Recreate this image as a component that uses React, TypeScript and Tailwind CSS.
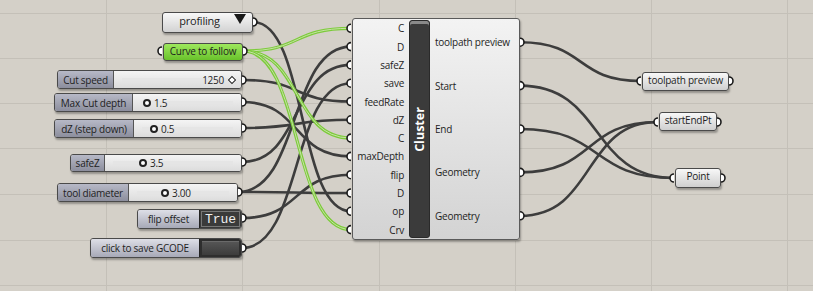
import React from "react";

type Pt = [number, number];

const IN_Y = Array.from({ length: 12 }, (_, i) => 28.3 + i * 18.3);
const OUT_Y = Array.from({ length: 5 }, (_, i) => 42.2 + i * 43.4);
const IN_X = 351;
const OUT_X = 520;

const inputs = ["C", "D", "safeZ", "save", "feedRate", "dZ", "C", "maxDepth", "flip", "D", "op", "Crv"];
const outputs = ["toolpath preview", "Start", "End", "Geometry", "Geometry"];

const wires: { a: Pt; b: Pt; green?: boolean }[] = [
  { a: [253, 22], b: [IN_X, IN_Y[10]] },
  { a: [243, 80], b: [IN_X, IN_Y[4]] },
  { a: [242, 102], b: [IN_X, IN_Y[7]] },
  { a: [242, 128], b: [IN_X, IN_Y[5]] },
  { a: [242, 162], b: [IN_X, IN_Y[2]] },
  { a: [238, 192], b: [IN_X, IN_Y[1]] },
  { a: [238, 192], b: [IN_X, IN_Y[9]] },
  { a: [242, 218], b: [IN_X, IN_Y[8]] },
  { a: [242, 248], b: [IN_X, IN_Y[3]] },
  { a: [OUT_X, OUT_Y[0]], b: [641, 81] },
  { a: [OUT_X, OUT_Y[1]], b: [674, 178] },
  { a: [OUT_X, OUT_Y[2]], b: [674, 178] },
  { a: [OUT_X, OUT_Y[3]], b: [658, 122] },
  { a: [OUT_X, OUT_Y[4]], b: [658, 122] },
  { a: [243, 51], b: [IN_X, IN_Y[0]], green: true },
  { a: [243, 51], b: [IN_X, IN_Y[6]], green: true },
  { a: [243, 51], b: [IN_X, IN_Y[11]], green: true },
];

const outGrips: Pt[] = [
  [253, 22], [243, 51], [242, 80], [242, 102], [242, 128], [242, 162], [238, 192], [242, 218], [242, 248],
  ...OUT_Y.map((y) => [OUT_X, y] as Pt),
  [729, 81], [717, 122], [721, 178],
];
const inGrips: Pt[] = [[162, 51], ...IN_Y.map((y) => [IN_X, y] as Pt), [641, 81], [658, 122], [674, 178]];

function wirePath([x1, y1]: Pt, [x2, y2]: Pt) {
  const c = Math.max(Math.abs(x2 - x1) * 0.55, 30);
  return `M${x1},${y1} C${x1 + c},${y1} ${x2 - c},${y2} ${x2},${y2}`;
}

const nodeBox =
  "absolute flex items-stretch rounded-[3px] border border-[#4a4a4a] shadow-[1px_2px_2px_rgba(0,0,0,0.3)] overflow-hidden";

function Slider(p: { x: number; y: number; w: number; h: number; lw: number; label: string; value: string; knob?: number; diamond?: boolean }) {
  return (
    <div className={nodeBox} style={{ left: p.x, top: p.y, width: p.w, height: p.h }}>
      <div
        className="flex items-center justify-center whitespace-nowrap border-r border-[#555] bg-gradient-to-b from-[#b7b9c7] to-[#8c8e9d] text-[#1e1e1e]"
        style={{ width: p.lw }}
      >
        {p.label}
      </div>
      <div className="relative flex-1 bg-gradient-to-b from-[#f4f4f4] to-[#dcdcdc]">
        <div className="absolute left-[8px] right-[8px] top-1/2 h-[3px] -translate-y-1/2 border-y border-[#e0e0e0] bg-[#ebebeb]" />
        {p.diamond ? (
          <div className="absolute right-[6px] top-0 flex h-full items-center gap-[5px] text-[#1e1e1e]">
            <span>{p.value}</span>
            <span className="h-[6px] w-[6px] rotate-45 border-[1.5px] border-[#222] bg-white" />
          </div>
        ) : (
          <div className="absolute top-0 flex h-full items-center gap-[3px] text-[#1e1e1e]" style={{ left: (p.knob ?? 0) - 4 }}>
            <span className="h-[8px] w-[8px] rounded-full border-2 border-[#222] bg-white" />
            <span>{p.value}</span>
          </div>
        )}
      </div>
    </div>
  );
}

function Simple(p: { x: number; y: number; w: number; h: number; label: string }) {
  return (
    <div
      className={`${nodeBox} items-center justify-center whitespace-nowrap bg-gradient-to-b from-[#f8f8f8] to-[#cfcfcf] text-[#1e1e1e]`}
      style={{ left: p.x, top: p.y, width: p.w, height: p.h }}
    >
      {p.label}
    </div>
  );
}

export default function App() {
  return (
    <div className="relative h-[291px] w-[813px] overflow-hidden bg-[#d4d0c8] font-['Open_Sans',sans-serif] text-[10px] leading-[normal] tracking-[-0.25px]">
      <svg className="absolute inset-0" width={813} height={291}>
        {[106, 242, 379, 515, 651, 787].map((x) => (
          <line key={"v" + x} x1={x + 0.5} y1={0} x2={x + 0.5} y2={291} stroke="#c4c0b8" strokeWidth={1} />
        ))}
        {[13, 58, 103, 148, 194, 240, 285].map((y) => (
          <line key={"h" + y} x1={0} y1={y + 0.5} x2={813} y2={y + 0.5} stroke="#c4c0b8" strokeWidth={1} />
        ))}
        {wires.map((w, i) =>
          w.green ? (
            <g key={i}>
              <path d={wirePath(w.a, w.b)} fill="none" stroke="#7ccb3a" strokeWidth={3.2} />
              <path d={wirePath(w.a, w.b)} fill="none" stroke="#c6e2a6" strokeWidth={1} />
            </g>
          ) : (
            <path key={i} d={wirePath(w.a, w.b)} fill="none" stroke="#3d3d3d" strokeWidth={2.6} />
          )
        )}
      </svg>

      {/* value list */}
      <div
        className={`${nodeBox} items-center bg-gradient-to-b from-[#f8f8f8] to-[#d2d2d2] text-[11px] text-[#1e1e1e]`}
        style={{ left: 162, top: 12, width: 91, height: 21 }}
      >
        <span className="flex-1 pl-[2px] text-center">profiling</span>
        <svg width={12} height={11} className="mr-[6px] shrink-0">
          <polygon points="0,1 12,1 6,11" fill="#1a1a1a" />
        </svg>
      </div>

      {/* curve param */}
      <div
        className={`${nodeBox} items-center justify-center whitespace-nowrap border-[#3f6e1e] bg-gradient-to-b from-[#9ee85c] to-[#69c22a] text-[#1e1e1e]`}
        style={{ left: 163, top: 43, width: 80, height: 18 }}
      >
        Curve to follow
      </div>

      <Slider x={57} y={70} w={185} h={19} lw={56} label="Cut speed" value="1250" diamond />
      <Slider x={54} y={93} w={188} h={19} lw={78} label="Max Cut depth" value="1.5" knob={146 - 132} />
      <Slider x={54} y={119} w={188} h={19} lw={79} label="dZ (step down)" value="0.5" knob={153 - 133} />
      <Slider x={70} y={154} w={172} h={18} lw={34} label="safeZ" value="3.5" knob={142 - 104} />
      <Slider x={57} y={183} w={181} h={19} lw={71} label="tool diameter" value="3.00" knob={164 - 128} />

      {/* toggle */}
      <div className={nodeBox} style={{ left: 137, top: 209, width: 105, height: 20 }}>
        <div className="flex w-[61px] items-center justify-center whitespace-nowrap bg-gradient-to-b from-[#dedfe7] to-[#a7a9b7] text-[#1e1e1e]">
          flip offset
        </div>
        <div className="flex flex-1 items-center justify-center border-l border-[#222] bg-[#3a3a3a] p-[1px]">
          <div className="flex h-full w-full items-center justify-center border border-[#777] font-['Liberation_Mono',monospace] text-[13px] tracking-normal text-[#eeeeee]">
            True
          </div>
        </div>
      </div>

      {/* button */}
      <div className={nodeBox} style={{ left: 90, top: 238, width: 152, height: 20 }}>
        <div className="flex w-[108px] items-center justify-center whitespace-nowrap bg-gradient-to-b from-[#dedfe7] to-[#a7a9b7] text-[#1e1e1e]">
          click to save GCODE
        </div>
        <div className="flex flex-1 border-l border-[#222] bg-[#2e2e2e] p-[2px]">
          <div className="h-full w-full border-t border-[#6a6a6a] bg-gradient-to-b from-[#555] to-[#3c3c3c]" />
        </div>
      </div>

      {/* cluster */}
      <div
        className="absolute flex rounded-[3px] border border-[#5a5a5a] bg-gradient-to-b from-[#f3f3f3] to-[#d3d3d3] text-[#1e1e1e] shadow-[1px_2px_2px_rgba(0,0,0,0.3)]"
        style={{ left: 352, top: 18, width: 168, height: 222 }}
      >
        <div className="flex w-[56px] flex-col justify-center pr-[5px]">
          {inputs.map((n, i) => (
            <div key={i} className="flex h-[18.3px] items-center justify-end whitespace-nowrap">
              {n}
            </div>
          ))}
        </div>
        <div className="my-[1px] flex w-[21px] items-center justify-center rounded-[3px] border border-[#2a2a2a] bg-[#3b3b3b] shadow-[inset_0_3px_0_#8a8a8a]">
          <span className="-rotate-90 whitespace-nowrap text-[12.5px] font-bold tracking-normal text-white">Cluster</span>
        </div>
        <div className="flex flex-1 flex-col justify-center pl-[5px]">
          {outputs.map((n, i) => (
            <div key={i} className="flex h-[43.4px] items-center whitespace-nowrap">
              {n}
            </div>
          ))}
        </div>
      </div>

      <Simple x={642} y={72} w={87} h={19} label="toolpath preview" />
      <Simple x={659} y={112} w={58} h={19} label="startEndPt" />
      <Simple x={675} y={168} w={46} h={20} label="Point" />

      <svg className="pointer-events-none absolute inset-0" width={813} height={291}>
        {outGrips.map(([x, y], i) => (
          <path key={"o" + i} d={`M${x},${y - 4} A4,4 0 0 1 ${x},${y + 4}`} fill="#fff" stroke="#1a1a1a" strokeWidth={1.6} />
        ))}
        {inGrips.map(([x, y], i) => (
          <path key={"i" + i} d={`M${x},${y - 4} A4,4 0 0 0 ${x},${y + 4}`} fill="#fff" stroke="#1a1a1a" strokeWidth={1.6} />
        ))}
      </svg>
    </div>
  );
}
